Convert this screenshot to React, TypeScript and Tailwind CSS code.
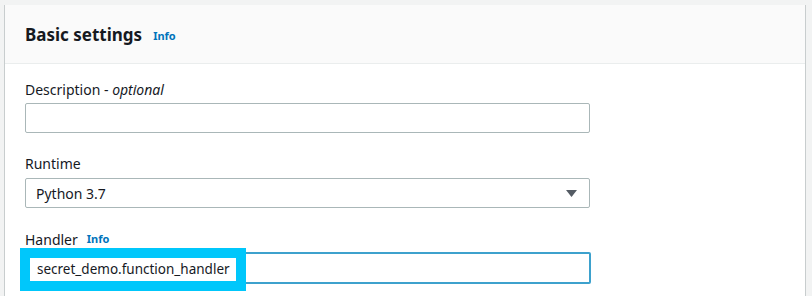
import React from "react";

export default function App() {
  return (
    <div
      className="w-[812px] h-[296px] overflow-hidden bg-[#f2f3f3] pt-[5px] pl-[4px] pr-[6px]"
      style={{ fontFamily: '"Noto Sans", "Open Sans", sans-serif' }}
    >
      <div className="h-[300px] bg-white border-x border-[#c8cdce]">
        <div className="h-[59px] bg-[#fafafa] border-b border-[#eaeded] px-[20px] flex items-center">
          <span className="text-[17px] font-bold text-[#16191f] leading-none">Basic settings</span>
          <span className="ml-[11px] mt-[3px] text-[11px] font-bold text-[#0073bb] leading-none">Info</span>
        </div>
        <div className="px-[20px] pt-[15px] flex flex-col">
          <div className="h-[20px] flex items-center text-[14px] text-[#16191f]">
            Description -&nbsp;<i>optional</i>
          </div>
          <div className="mt-[4px] w-[565px] h-[30px] border border-[#aab7b8] rounded-[2px] bg-white" />
          <div className="mt-[20px] h-[20px] flex items-center text-[14px] text-[#16191f]">Runtime</div>
          <div className="mt-[5px] w-[565px] h-[30px] border border-[#aab7b8] rounded-[2px] bg-white flex items-center justify-between pl-[10px] pr-[12px]">
            <span className="text-[14px] text-[#16191f]">Python 3.7</span>
            <svg width="11" height="7" viewBox="0 0 11 7">
              <polygon points="0,0 11,0 5.5,7" fill="#545b64" />
            </svg>
          </div>
          <div className="mt-[21px] h-[20px] flex items-center text-[14px] text-[#16191f]">
            Handler
            <span className="ml-[9px] text-[11px] font-bold text-[#0073bb]">Info</span>
          </div>
          <div className="relative mt-[3px] w-[566px] h-[32px] border-2 border-[#3da1cd] rounded-[2px] bg-white">
            <div className="absolute left-[-7px] top-[-6px] w-[226px] h-[43px] bg-[#00c7fb] p-[10px]">
              <div className="w-full h-full bg-white flex items-center pl-[7px] text-[13.5px] text-[#16191f] whitespace-nowrap">
                secret_demo.function_handler
              </div>
            </div>
          </div>
        </div>
      </div>
    </div>
  );
}
